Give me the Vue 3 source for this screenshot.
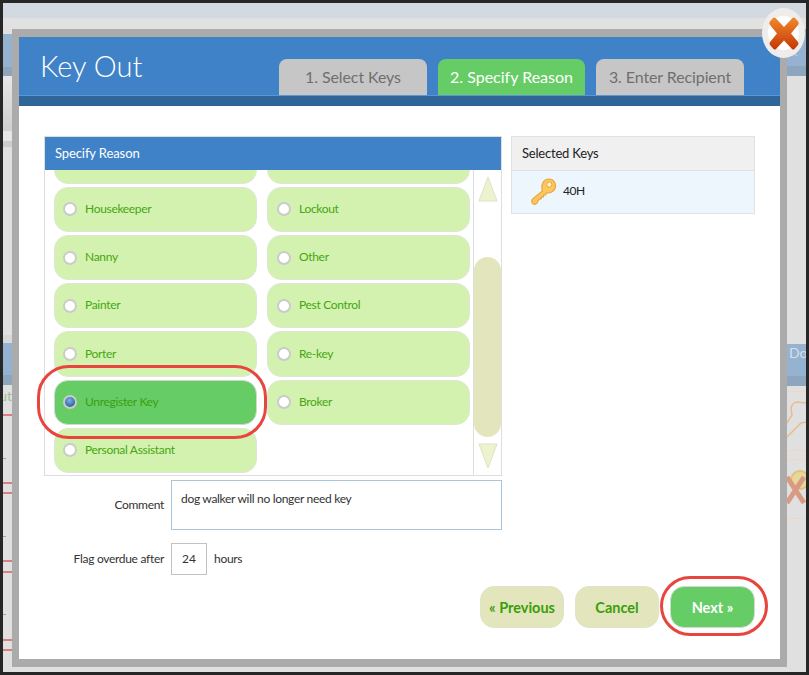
<script setup>
const rows = [
  { label: '', partial: true }, { label: '', partial: true },
  { label: 'Housekeeper' }, { label: 'Lockout' },
  { label: 'Nanny' }, { label: 'Other' },
  { label: 'Painter' }, { label: 'Pest Control' },
  { label: 'Porter' }, { label: 'Re-key' },
  { label: 'Unregister Key', selected: true }, { label: 'Broker' },
  { label: 'Personal Assistant' }
]
const leftBits = [
  ['h5', 'plain'], ['h33', 'blue'], ['h9', 'bluedark'], ['h5', 'pale'], ['h50', 'fade'], ['h10', 'pale'], ['h6', 'band'],
  ['h188', 'plain'], ['h8', 'soft'], ['h32', 'blue'], ['h10', 'bluedark']
]
const leftMarks = [414, 482, 492, 560, 571, 639, 649]
const leftDots = [458, 536, 614]
</script>

<template>
  <div class="frame">
    <div class="backdrop">
      <div class="top-strip"></div>
      <div class="grey-strip"></div>
      <div class="sides">
        <div class="side left">
          <div v-for="(b, i) in leftBits" :key="i" :class="['bit', b[0], b[1]]"></div>
          <span class="ut">ut</span>
          <i v-for="y in leftMarks" :key="y" class="mark" :style="{ top: (y - 29) + 'px' }"></i>
          <i v-for="y in leftDots" :key="y" class="dot" :style="{ top: (y - 29) + 'px' }"></i>
        </div>
        <div class="side right">
          <div class="bit h37 blue"></div>
          <div class="bit h10 bluedark"></div>
          <div class="bit h268 plain"></div>
          <div class="bit h32 blue"></div>
          <div class="bit h10 bluedark"></div>
          <span class="nt">nt</span>
          <span class="do">Do</span>
          <i class="rule r1"></i><i class="rule r2"></i><i class="rule r3"></i><i class="rule r4"></i>
          <svg class="ghost-keys" width="19" height="115" viewBox="0 0 19 115">
            <path d="M0 43 L14 29 L19 28 M0 29 L5 21 L4 14 Q6 8 10 8 L19 9" fill="none" stroke="#e9bd8a" stroke-width="1.5"/>
            <circle cx="13" cy="86" r="9" fill="#e6d79a" stroke="#e5c07a" stroke-width="2"/>
            <path d="M0 83 L17 109 M17 83 L0 109" stroke="#d99a84" stroke-width="5" fill="none"/>
          </svg>
        </div>
      </div>
    </div>

    <div class="modal">
      <header class="head">
        <h1 class="title">Key Out</h1>
        <nav class="tabs">
          <div class="tab">1. Select Keys</div>
          <div class="tab on">2. Specify Reason</div>
          <div class="tab">3. Enter Recipient</div>
        </nav>
      </header>
      <div class="stripe"></div>
      <main class="body">
        <div class="cols">
          <section class="panel">
            <div class="panel-title">Specify Reason</div>
            <div class="list-wrap">
              <div class="list-clip">
                <div class="list">
                  <div v-for="(r, i) in rows" :key="i" :class="['item', { sel: r.selected }]">
                    <template v-if="!r.partial">
                      <span class="radio"></span>
                      <span class="name">{{ r.label }}</span>
                    </template>
                  </div>
                </div>
              </div>
              <div class="scroll">
                <svg class="arrow up" width="20" height="26" viewBox="0 0 20 26"><path d="M10 1 L19 25 H1 Z" fill="#eef3cf" stroke="#dfe2c8"/></svg>
                <div class="thumb"></div>
                <svg class="arrow down" width="20" height="26" viewBox="0 0 20 26"><path d="M1 1 H19 L10 25 Z" fill="#eef3cf" stroke="#dfe2c8"/></svg>
              </div>
            </div>
            <div class="ring ring-item"></div>
          </section>
          <aside class="keys">
            <div class="keys-title">Selected Keys</div>
            <div class="key-row">
              <svg class="key-icon" width="25" height="28" viewBox="0 0 25 28">
                <path d="M11.5 13 C9.5 7 12.5 1 18 1 C23 1 25.5 6 24 10.5 C22.5 14 18.5 15.5 15.5 14.8 L14.5 17 L12.5 17 L12.5 19 L10.5 19 L10 21 L8 21.2 L6 25 C4 27.5 .7 26 .7 23.3 C.7 22.3 1 21.6 2 20.6 Z" fill="#fcc85e" stroke="#e9a43a" stroke-width="1.2" stroke-linejoin="round"/>
                <circle cx="18.3" cy="6.6" r="2.6" fill="#fff3c8" stroke="#e9a43a"/>
              </svg>
              <span class="key-name">40H</span>
            </div>
          </aside>
        </div>

        <div class="comment-row">
          <label class="lab">Comment</label>
          <div class="comment">dog walker will no longer need key</div>
        </div>
        <div class="flag-row">
          <label class="lab">Flag overdue after</label>
          <div class="hours">24</div>
          <span class="unit">hours</span>
        </div>
        <div class="actions">
          <button class="btn">« Previous</button>
          <button class="btn">Cancel</button>
          <button class="btn go">Next »<span class="ring ring-next"></span></button>
        </div>
      </main>
    </div>

    <div class="close">
      <span class="close-disc"></span>
      <svg class="close-x" width="30" height="33" viewBox="0 0 30 33">
        <defs>
          <linearGradient id="xg" x1="0" y1="0" x2="0" y2="1">
            <stop offset="0" stop-color="#ee8a2c"/>
            <stop offset="1" stop-color="#c63606"/>
          </linearGradient>
        </defs>
        <path d="M6.5 1 L15 10 L23.5 1 Q25 0 26 1 L29.5 5 Q30 6.5 29 8 L22 16.5 L29 25 Q30 26.5 29 28 L25.5 32 Q24 33 23 32 L15 23.5 L7 32 Q6 33 4.5 32 L1 28 Q0 26.5 1 25 L8 16.5 L1 8 Q0 6.5 .5 5 L4 1 Q5 0 6.5 1 Z" fill="url(#xg)"/>
      </svg>
    </div>
  </div>
</template>

<style>
html, body { margin: 0; background: #262626; }
</style>

<style scoped>
.frame {
  position: relative;
  width: 809px;
  height: 675px;
  padding: 3px;
  box-sizing: border-box;
  background: #262626;
  overflow: hidden;
  font-family: Lato, "Open Sans", sans-serif;
}
.backdrop { height: 669px; background: #e0e0e0; display: flex; flex-direction: column; }
.top-strip { height: 15px; background: #d2d9e1; flex: none; }
.grey-strip { height: 11px; background: #e1e1e1; flex: none; }
.sides { flex: 1; display: flex; justify-content: space-between; }
.side { position: relative; overflow: hidden; }
.side.left { width: 9px; }
.side.right { width: 19px; }
.bit { width: 100%; }
.h5 { height: 5px; } .h33 { height: 33px; } .h9 { height: 9px; } .h50 { height: 50px; }
.h10 { height: 10px; } .h6 { height: 6px; } .h188 { height: 188px; } .h8 { height: 8px; }
.h32 { height: 32px; } .h37 { height: 37px; } .h268 { height: 268px; }
.plain { background: #e0e0e0; }
.pale { background: #e6e6e6; }
.soft { background: #d8d8d8; }
.band { background: #cdcdcd; }
.blue { background: #96b2d1; }
.bluedark { background: #8ea5be; }
.fade { background: linear-gradient(#e4e4e4, #cfcfcf); }
.ut { position: absolute; right: 0; top: 358px; font-size: 14px; color: #9dbf8e; line-height: 18px; }
.mark { position: absolute; left: 0; width: 9px; height: 2px; background: #d77f82; }
.dot { position: absolute; left: 0; width: 3px; height: 1px; background: #8fa8c8; }
.nt { position: absolute; left: -1px; top: 14px; font-size: 13px; color: #b8c8da; line-height: 16px; }
.do { position: absolute; left: 2px; top: 315px; font-size: 14px; color: #d5e0ec; line-height: 18px; }
.rule { position: absolute; left: 0; width: 19px; height: 1px; background: #eed8c4; }
.r1 { top: 362px; } .r2 { top: 421px; } .r3 { top: 430px; } .r4 { top: 489px; }
.ghost-keys { position: absolute; left: 0; top: 365px; }

.modal {
  position: absolute;
  left: 12px;
  top: 29px;
  width: 775px;
  height: 638px;
  box-sizing: border-box;
  border: solid #ababab;
  border-width: 8px 7px;
  background: #fff;
  display: flex;
  flex-direction: column;
}
.head {
  height: 58px;
  flex: none;
  background: #3f82c7;
  display: flex;
  align-items: flex-start;
  justify-content: space-between;
  padding: 0 36px 0 21px;
}
.title { margin: 8px 0 0; font-size: 29px; line-height: 42px; font-weight: 300; color: #fff; }
.tabs { display: flex; gap: 11px; margin-top: 22px; }
.tab {
  width: 148px;
  height: 36px;
  box-sizing: border-box;
  background: #c6c6c6;
  color: #6f6f6f;
  border-radius: 8px 8px 0 0;
  font-size: 16px;
  line-height: 35px;
  text-align: center;
  letter-spacing: -0.1px;
}
.tab.on { background: #66cd66; color: #fff; width: 147px; letter-spacing: 0; }
.stripe { height: 11px; flex: none; background: #30659a; border-top: 1px solid #5b96d2; box-sizing: border-box; }
.body { padding: 30px 25px 0; flex: 1; min-height: 0; display: flex; flex-direction: column; }
.cols { display: flex; gap: 9px; align-items: flex-start; }
.panel {
  position: relative;
  width: 458px;
  height: 340px;
  flex: none;
  box-sizing: border-box;
  border: 1px solid #dedede;
  display: flex;
  flex-direction: column;
}
.panel-title {
  height: 33px;
  flex: none;
  background: #3f82c7;
  color: #fff;
  font-size: 13px;
  line-height: 33px;
  padding-left: 10px;
  letter-spacing: -0.1px;
}
.list-wrap { flex: 1; min-height: 0; display: flex; }
.list-clip { width: 428px; overflow: hidden; padding-left: 9px; box-sizing: border-box; }
.list {
  margin-top: -31.3px;
  width: 416px;
  display: grid;
  grid-template-columns: 203px 203px;
  grid-auto-rows: 45.2px;
  column-gap: 10px;
  row-gap: 3px;
}
.item {
  display: flex;
  align-items: center;
  gap: 8px;
  padding-left: 8px;
  box-sizing: border-box;
  background: #d3f2b0;
  border: 1px solid #dfe6d6;
  border-radius: 14px;
  color: #46a70e;
  font-size: 12px;
  letter-spacing: -0.32px;
}
.item:nth-child(even) { padding-left: 9px; }
.item.sel { background: #66cd66; border-color: #d0d8d0; color: #3a9e10; }
.name { margin-bottom: 2px; }
.radio {
  width: 14px;
  height: 14px;
  box-sizing: border-box;
  flex: none;
  border: 2.5px solid #cbcbcb;
  border-radius: 50%;
  background: #fff;
}
.sel .radio { background: radial-gradient(circle at 45% 35%, #7fb2e0, #2f6aa5 70%, #1f4f80); }
.scroll {
  width: 28px;
  flex: none;
  box-sizing: border-box;
  border-left: 1px solid #dedede;
  display: flex;
  flex-direction: column;
  align-items: center;
}
.arrow { flex: none; display: block; }
.arrow.up { margin-top: 6px; }
.thumb { width: 27px; height: 180px; margin-top: 55px; background: #e3e6bc; border-radius: 14px; }
.arrow.down { margin-top: 6px; }
.ring {
  position: absolute;
  box-sizing: border-box;
  border: 3px solid #e8453f;
  pointer-events: none;
}
.ring-item { left: -8px; top: 228px; width: 230px; height: 74px; border-radius: 32px; }
.ring-next { left: -11px; top: -11px; width: 108px; height: 60px; border-radius: 30px; }
.keys { width: 244px; flex: none; box-sizing: border-box; border: 1px solid #e2e2e2; }
.keys-title {
  height: 33px;
  background: #f0f0f0;
  color: #222;
  font-size: 13px;
  line-height: 33px;
  padding-left: 10px;
  border-bottom: 1px solid #e0e0e0;
  letter-spacing: -0.2px;
}
.key-row {
  height: 42px;
  box-sizing: border-box;
  background: #eef6fd;
  display: flex;
  align-items: center;
  gap: 7px;
  padding-left: 19px;
}
.key-icon { flex: none; }
.key-name { font-size: 12px; color: #222; margin-bottom: 3px; letter-spacing: -0.4px; }
.comment-row { display: flex; align-items: center; gap: 7px; margin-top: 4px; }
.lab { width: 120px; flex: none; text-align: right; font-size: 12px; color: #333; margin-top: -2px; letter-spacing: -0.3px; }
.comment {
  width: 331px;
  height: 50px;
  box-sizing: border-box;
  border: 1px solid #a9c6dc;
  padding: 10px 9px;
  font-size: 12px;
  line-height: 16px;
  letter-spacing: -0.3px;
  color: #333;
}
.flag-row { display: flex; align-items: center; gap: 7px; margin-top: 13px; }
.hours {
  width: 36px;
  height: 32px;
  box-sizing: border-box;
  border: 1px solid #c2c2c2;
  text-align: center;
  line-height: 30px;
  font-size: 12px;
  color: #333;
}
.unit { font-size: 12px; color: #333; letter-spacing: -0.3px; margin-top: -2px; }
.actions { display: flex; justify-content: flex-end; gap: 11px; margin-top: 11px; }
.btn {
  position: relative;
  width: 84px;
  height: 42px;
  padding: 0;
  border: 1px solid #e0e3c6;
  border-radius: 14px;
  background: #e3e6bc;
  color: #3a9e0a;
  font: 700 14.5px Lato, "Open Sans", sans-serif;
}
.btn.go { background: #66cd66; border-color: #cfdccf; color: #fff; width: 85px; }

.close { position: absolute; left: 762px; top: 8px; width: 43px; height: 50px; }
.close-disc { position: absolute; inset: 0; border-radius: 50%; background: #eeedeb; }
.close-disc::after { content: ""; position: absolute; left: 6px; top: 8px; width: 31px; height: 34px; border-radius: 50%; background: #fff; }
.close-x { position: absolute; left: 7px; top: 9px; }
</style>
